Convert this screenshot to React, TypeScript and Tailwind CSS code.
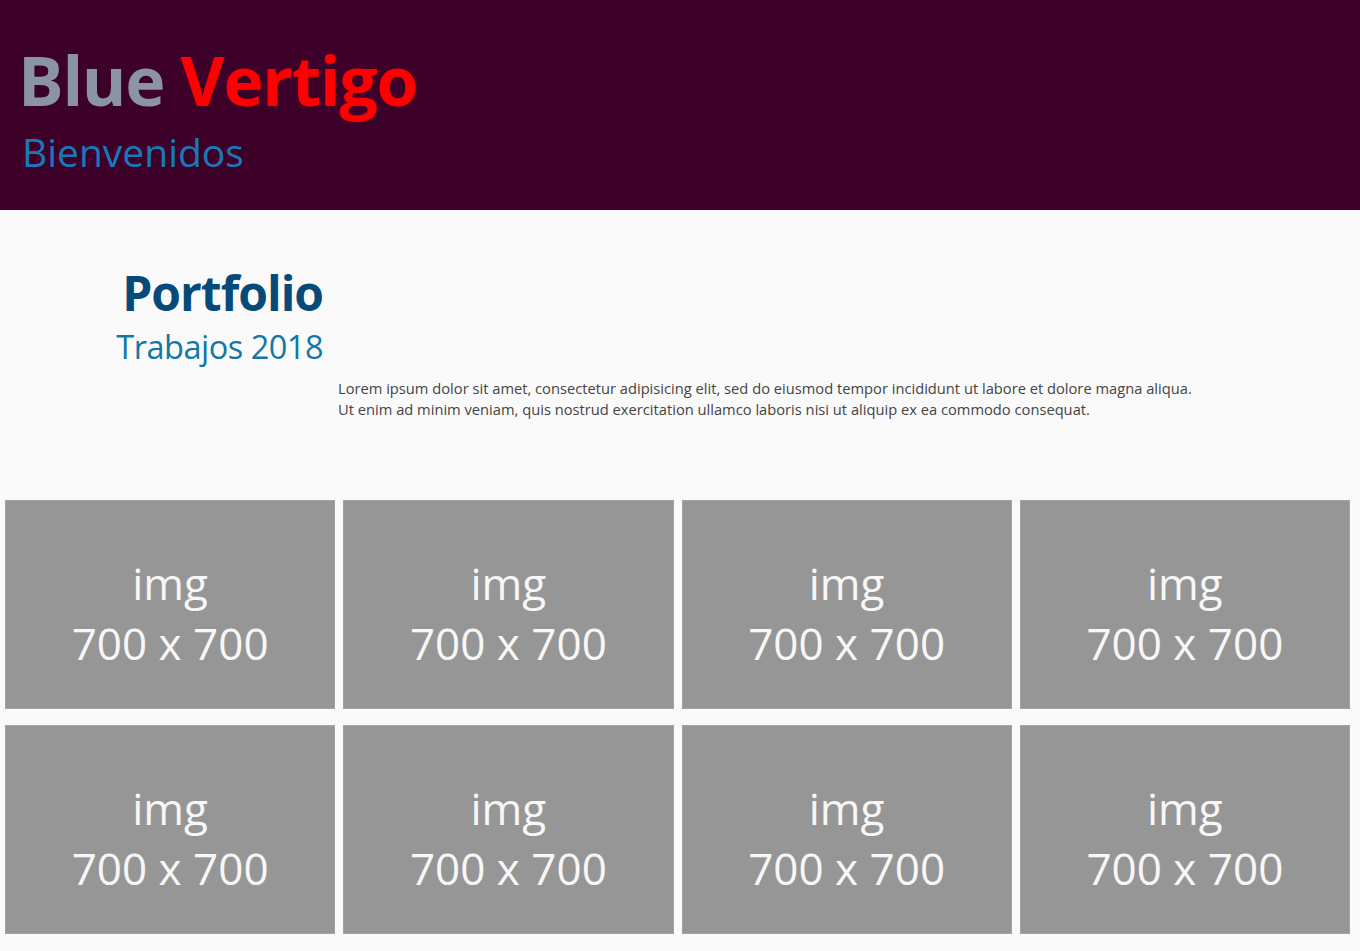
export default function App() {
  const tiles = Array.from({ length: 8 });
  return (
    <div className="min-h-[951px] bg-[#fafafa]" style={{ fontFamily: '"Open Sans", sans-serif' }}>
      {/* Header */}
      <header className="h-[210px] bg-[#3d0029] pl-[18px] pt-[40px]">
        <h1 className="text-[68px] font-bold leading-[80px] tracking-[-1.3px]">
          <span className="text-[#8a94a5]">Blue</span>{" "}
          <span className="text-[#ff0000]">Vertigo</span>
        </h1>
        <p className="pl-[4px] pt-[9px] text-[39px] leading-[46px] text-[#1a78b8]">Bienvenidos</p>
      </header>

      {/* Intro */}
      <section className="flex pt-[54px]">
        <div className="w-[323px] flex flex-col items-end shrink-0">
          <h2 className="text-[48px] font-bold leading-[58px] text-[#064a79] tracking-[-1px]">Portfolio</h2>
          <p className="pt-[4px] text-[32.5px] leading-[42px] text-[#1377a8] tracking-[-0.5px]">Trabajos 2018</p>
        </div>
        <div className="pt-[114px] pl-[15px] text-[14.7px] leading-[21px] text-[#444]">
          <p>Lorem ipsum dolor sit amet, consectetur adipisicing elit, sed do eiusmod tempor incididunt ut labore et dolore magna aliqua.</p>
          <p>Ut enim ad minim veniam, quis nostrud exercitation ullamco laboris nisi ut aliquip ex ea commodo consequat.</p>
        </div>
      </section>

      {/* Grid */}
      <section className="mt-[80px] pl-[5px] pr-[10px] grid grid-cols-4 gap-x-[8px] gap-y-[16px]">
        {tiles.map((_, i) => (
          <div
            key={i}
            className="h-[209px] bg-[#969696] border border-[#a3a3a3] flex flex-col items-center pt-[52px] text-[#f7f7f7] text-[44px] leading-[60px]"
          >
            <span>img</span>
            <span>700 x 700</span>
          </div>
        ))}
      </section>
    </div>
  );
}
